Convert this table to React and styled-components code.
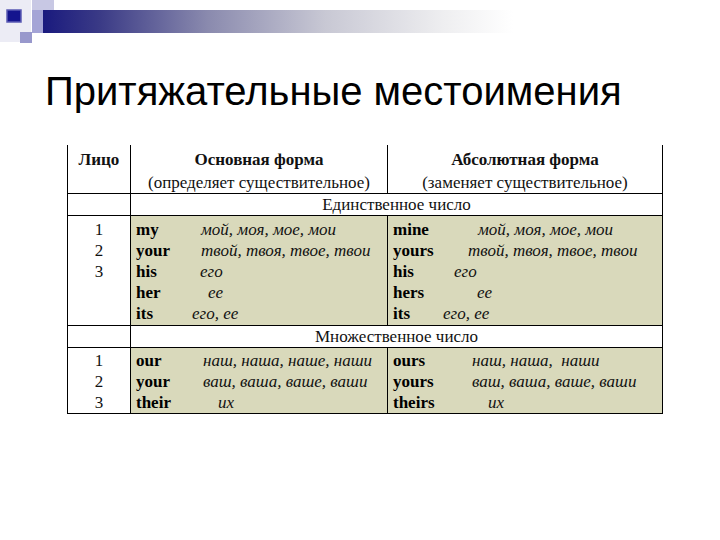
import React from "react";
import styled, { createGlobalStyle } from "styled-components";

const Global = createGlobalStyle`
  html, body { margin: 0; padding: 0; background: #fff; }
  body { width: 720px; height: 540px; overflow: hidden; }
`;

const Page = styled.div`
  width: 720px;
  height: 540px;
  position: relative;
  background: #fff;
`;

const Deco = styled.svg`
  display: block;
  width: 720px;
  height: 45px;
`;

const Title = styled.h1`
  margin: 24px 0 0 45px;
  font-family: "Liberation Sans", Arial, sans-serif;
  font-weight: normal;
  font-size: 40px;
  line-height: 44px;
  color: #000;
  white-space: nowrap;
`;

const Table = styled.div`
  margin: 32px 0 0 67px;
  width: 596px;
  box-sizing: border-box;
  display: grid;
  grid-template-columns: 63px 257px 274px;
  grid-template-rows: 49px 22px 110px 22px 66px;
  border-left: 1px solid #000;
  border-right: 1px solid #000;
  font-family: "Liberation Serif", "Times New Roman", serif;
  font-size: 17px;
  color: #111;
`;

const Cell = styled.div`
  box-sizing: border-box;
  border-bottom: 1px solid #000;
  border-right: ${(p) => (p.$right ? "1px solid #000" : "none")};
  background: ${(p) => (p.$green ? "#d9d9bb" : "#fff")};
  grid-column: ${(p) => (p.$span ? `span ${p.$span}` : "auto")};
  padding: ${(p) => p.$pad || "0"};
  text-align: ${(p) => p.$align || "left"};
  line-height: ${(p) => p.$lh || "21px"};
`;

const HeadBold = styled.div`
  font-weight: bold;
  line-height: 23px;
`;

const HeadSub = styled.div`
  line-height: 23px;
`;

const Line = styled.div`
  display: flex;
  white-space: nowrap;
  height: 21px;
  line-height: 21px;
`;

const Word = styled.span`
  font-weight: bold;
  color: #000;
  width: ${(p) => p.$w}px;
  flex: none;
`;

const Tr = styled.span`
  font-style: italic;
  font-size: 17px;
  color: #111;
  white-space: pre;
`;

const Num = styled.div`
  height: 21px;
  line-height: 21px;
`;

const singular = [
  [["my", 65, "мой, моя, мое, мои"], ["your", 65, "твой, твоя, твое, твои"], ["his", 64, "его"], ["her", 72, "ее"], ["its", 56, "его, ее"]],
  [["mine", 85, "мой, моя, мое, мои"], ["yours", 75, "твой, твоя, твое, твои"], ["his", 61, "его"], ["hers", 84, "ее"], ["its", 50, "его, ее"]],
];

const plural = [
  [["our", 67, "наш, наша, наше, наши"], ["your", 67, "ваш, ваша, ваше, ваши"], ["their", 82, "их"]],
  [["ours", 79, "наш, наша,  наши"], ["yours", 79, "ваш, ваша, ваше, ваши"], ["theirs", 95, "их"]],
];

function Block({ rows }) {
  return rows.map(([w, x, t], i) => (
    <Line key={i}>
      <Word $w={x}>{w}</Word>
      <Tr>{t}</Tr>
    </Line>
  ));
}

export default function App() {
  return (
    <Page>
      <Global />
      <Deco viewBox="0 0 720 45">
        <defs>
          <linearGradient id="bar" x1="0" x2="1" y1="0" y2="0">
            <stop offset="0" stopColor="#1a1a7e" />
            <stop offset="0.12" stopColor="#3a3a86" />
            <stop offset="0.35" stopColor="#8a8aae" />
            <stop offset="0.6" stopColor="#c8c8d4" />
            <stop offset="0.85" stopColor="#eeeef0" />
            <stop offset="1" stopColor="#ffffff" />
          </linearGradient>
        </defs>
        <rect x="0" y="0" width="31" height="42" fill="#ececf5" />
        <rect x="32" y="0" width="22" height="22" fill="#c8c8e4" />
        <rect x="43" y="10" width="470" height="23" fill="url(#bar)" />
        <rect x="32" y="10" width="11" height="23" fill="#a4a4d6" />
        <rect x="20" y="32" width="12" height="11" fill="#9898cc" />
        <rect x="7" y="10" width="14" height="12" fill="#14148e" stroke="#5a5ab4" strokeWidth="1.5" />
      </Deco>
      <Title>Притяжательные местоимения</Title>
      <Table>
        <Cell $right $align="center" $pad="3px 0 0">
          <HeadBold>Лицо</HeadBold>
        </Cell>
        <Cell $right $align="center" $pad="3px 0 0">
          <HeadBold>Основная форма</HeadBold>
          <HeadSub>(определяет существительное)</HeadSub>
        </Cell>
        <Cell $align="center" $pad="3px 0 0">
          <HeadBold>Абсолютная форма</HeadBold>
          <HeadSub>(заменяет существительное)</HeadSub>
        </Cell>

        <Cell $right />
        <Cell $span={2} $align="center" $lh="21px">Единственное число</Cell>

        <Cell $right $align="center" $pad="3px 0 0">
          <Num>1</Num>
          <Num>2</Num>
          <Num>3</Num>
        </Cell>
        <Cell $right $green $pad="3px 0 0 5px">
          <Block rows={singular[0]} />
        </Cell>
        <Cell $green $pad="3px 0 0 5px">
          <Block rows={singular[1]} />
        </Cell>

        <Cell $right />
        <Cell $span={2} $align="center" $lh="21px">Множественное число</Cell>

        <Cell $right $align="center" $pad="2px 0 0">
          <Num>1</Num>
          <Num>2</Num>
          <Num>3</Num>
        </Cell>
        <Cell $right $green $pad="2px 0 0 5px">
          <Block rows={plural[0]} />
        </Cell>
        <Cell $green $pad="2px 0 0 5px">
          <Block rows={plural[1]} />
        </Cell>
      </Table>
    </Page>
  );
}
